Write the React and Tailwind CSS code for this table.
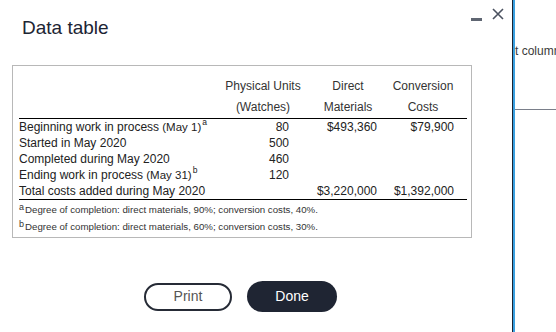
import React from "react";

const rows = [
  { label: "Beginning work in process", paren: "(May 1)", sup: "a", units: "80", dm: "$493,360", cc: "$79,900" },
  { label: "Started in May 2020", units: "500" },
  { label: "Completed during May 2020", units: "460" },
  { label: "Ending work in process", paren: "(May 31)", sup: "b", units: "120" },
  { label: "Total costs added during May 2020", dm: "$3,220,000", cc: "$1,392,000" },
];

const DataTable = () => {
  return (
    <div className="relative w-[556px] h-[332px] overflow-hidden bg-white font-['Liberation_Sans',Arial,sans-serif] text-[#222]">
      {/* left: the dialog */}
      <div className="absolute left-0 top-0 w-[512px] h-full">
        <div className="flex items-start justify-between pl-[22px] pr-[8px] pt-[16px]">
          <h2 className="text-[19px] leading-[24px] text-[#1c2433]">Data table</h2>
          <div className="flex items-start gap-[10px] -mt-[9px]">
            <span className="block w-[11px] h-[3px] bg-[#5f6672] mt-[11px]"></span>
            <svg width="12" height="12" viewBox="0 0 12 12" className="mt-[1px]">
              <path d="M1 1 L11 11 M11 1 L1 11" stroke="#4b5260" strokeWidth="1.6" fill="none" />
            </svg>
          </div>
        </div>

        <div className="ml-[12px] mt-[25px] w-[460px] h-[173px] border border-[#b8b8b8] pl-[6px] pt-[9px]">
          <div className="w-[448px] text-[12px]">
            <div className="border-b border-black pb-[1px] text-[#333]">
              <div className="flex h-[21px] items-center">
                <div className="w-[202px]"></div>
                <div className="w-[84px] text-center">Physical Units</div>
                <div className="w-[86px] text-center">Direct</div>
                <div className="w-[64px] text-center">Conversion</div>
              </div>
              <div className="flex h-[21px] items-center">
                <div className="w-[202px]"></div>
                <div className="w-[84px] text-center">(Watches)</div>
                <div className="w-[86px] text-center">Materials</div>
                <div className="w-[64px] text-center">Costs</div>
              </div>
            </div>

            <div className="border-b border-black">
              {rows.map((r, i) => (
                <div key={i} className="flex h-[16px] items-center leading-[14px]">
                  <div className="w-[202px] whitespace-nowrap">
                    {r.label}
                    {r.paren && <span className="text-[11.5px]"> {r.paren}</span>}
                    {r.sup && (
                      <span className="inline-block align-top text-[8.5px] leading-none -mt-[2px] ml-[1px]">{r.sup}</span>
                    )}
                  </div>
                  <div className="w-[84px] pr-[16px] text-right">{r.units}</div>
                  <div className="w-[86px] pr-[14px] text-right">{r.dm}</div>
                  <div className="w-[64px] pr-[1px] text-right">{r.cc}</div>
                </div>
              ))}
            </div>

            <div className="text-[9.7px] text-[#333] pt-[2px]">
              <div className="flex h-[17px] items-end pb-[1px]">
                <span className="self-start text-[9px] leading-none mt-[1px] mr-[1px]">a</span>
                <span>Degree of completion: direct materials, 90%; conversion costs, 40%.</span>
              </div>
              <div className="flex h-[17px] items-end pb-[1px]">
                <span className="self-start text-[9px] leading-none mt-[1px] mr-[1px]">b</span>
                <span>Degree of completion: direct materials, 60%; conversion costs, 30%.</span>
              </div>
            </div>
          </div>
        </div>

        <div className="flex items-center gap-[15px] pt-[43px] pl-[144px]">
          <button className="w-[88px] h-[28px] rounded-full border-2 border-[#262b36] text-[14px] text-[#555]">
            Print
          </button>
          <button className="w-[90px] h-[31px] rounded-full bg-[#1f2533] text-[14px] text-white">
            Done
          </button>
        </div>
      </div>

      {/* right: page behind the dialog */}
      <div className="absolute left-[512px] top-0 h-full flex">
        <div className="w-[1px] h-full bg-[#1c2433]"></div>
        <div className="w-[2px] h-full bg-[#3aa0e0]"></div>
        <div className="w-[41px]">
          <div className="mt-[42px] text-[12px] whitespace-nowrap text-[#3a3a3a]">t column</div>
          <div className="mt-[49px] h-[1px] w-[60px] bg-[#7a7f8a]"></div>
        </div>
      </div>
    </div>
  );
};

export default function App() {
  return <DataTable />;
}
